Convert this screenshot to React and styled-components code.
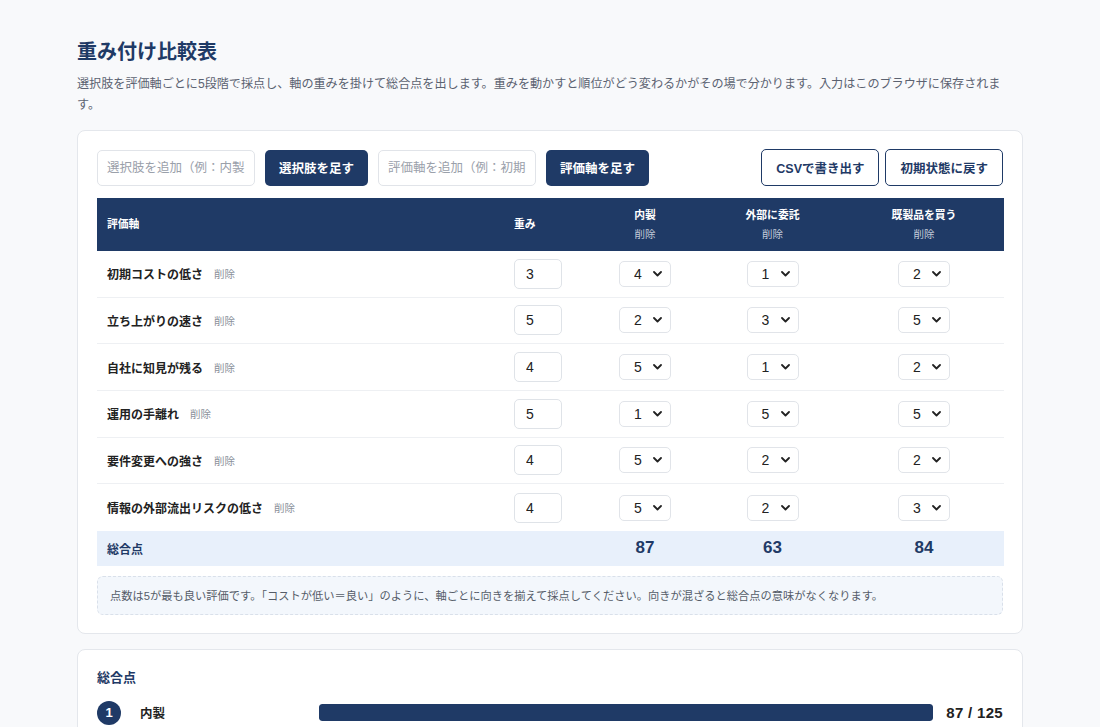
import React from "react";
import styled, { createGlobalStyle } from "styled-components";

const NAVY = "#1f3a66";
const COLS = "407px 85px 112px 143px 160px";

const GlobalStyle = createGlobalStyle`
  body {
    margin: 0;
    background: #f8f9fb;
    font-family: "Liberation Sans", "Noto Sans CJK JP", sans-serif;
    color: #222;
  }
`;

const Page = styled.div`
  width: 946px;
  margin: 0 auto;
  padding: 38px 0 40px;
`;

const Title = styled.h1`
  margin: 0;
  font-size: 20px;
  line-height: 28px;
  font-weight: 700;
  color: ${NAVY};
`;

const Lead = styled.p`
  margin: 8px 0 14px;
  font-size: 12.1px;
  line-height: 21px;
  color: #5b6271;
`;

const Card = styled.section`
  background: #fff;
  border: 1px solid #e4e7ec;
  border-radius: 8px;
  padding: 18px 19px;
  margin-bottom: 15px;
`;

const Toolbar = styled.div`
  display: flex;
  align-items: center;
  gap: 10px;
  margin-bottom: 12px;
`;

const Spacer = styled.div`
  flex: 1;
`;

const TextInput = styled.input`
  box-sizing: border-box;
  width: 158px;
  height: 36px;
  border: 1px solid #e1e4e9;
  border-radius: 5px;
  padding: 0 9px;
  font: inherit;
  font-size: 12.5px;
  color: #222;
  background: #fff;
  &::placeholder {
    color: #9aa0aa;
  }
`;

const Button = styled.button`
  box-sizing: border-box;
  height: ${({ $outline }) => ($outline ? "37px" : "36px")};
  padding: 0 14px;
  border-radius: 5px;
  font: inherit;
  font-size: 12.5px;
  font-weight: 700;
  cursor: pointer;
  background: ${({ $outline }) => ($outline ? "#fff" : NAVY)};
  color: ${({ $outline }) => ($outline ? NAVY : "#fff")};
  border: ${({ $outline }) => ($outline ? `1.5px solid ${NAVY}` : "none")};
  margin-left: ${({ $tight }) => ($tight ? "-4px" : "0")};
`;

const Table = styled.div`
  width: 907px;
`;

const Row = styled.div`
  display: grid;
  grid-template-columns: ${COLS};
  align-items: center;
  height: ${({ $h }) => $h}px;
  background: ${({ $bg }) => $bg || "#fff"};
  border-bottom: ${({ $line }) => ($line ? "1px solid #eef0f3" : "none")};
  box-sizing: border-box;
`;

const HeadCell = styled.div`
  color: #fff;
  font-size: 10.8px;
  font-weight: 700;
  line-height: 19px;
  padding: 0 10px;
  text-align: ${({ $center }) => ($center ? "center" : "left")};
`;

const HeadSub = styled.div`
  font-weight: 400;
  color: #c3cbda;
  font-size: 10.5px;
`;

const Cell = styled.div`
  padding: 0 10px;
  display: flex;
  align-items: center;
  justify-content: ${({ $center }) => ($center ? "center" : "flex-start")};
`;

const Label = styled.span`
  font-size: 12px;
  font-weight: 700;
  color: #222;
`;

const Remove = styled.span`
  font-size: 10.5px;
  color: #8a909a;
  margin-left: 11px;
`;

const WeightInput = styled.input`
  box-sizing: border-box;
  width: 48px;
  height: 30px;
  border: 1px solid #dfe3e8;
  border-radius: 5px;
  padding: 0 11px;
  font: inherit;
  font-size: 14px;
  color: #222;
`;

const SelectWrap = styled.div`
  position: relative;
  width: 52px;
  height: 26px;
`;

const Select = styled.select`
  appearance: none;
  box-sizing: border-box;
  width: 100%;
  height: 100%;
  border: 1px solid #e1e4e9;
  border-radius: 5px;
  background: #fff;
  padding: 0 0 0 14px;
  font: inherit;
  font-size: 14px;
  color: #222;
`;

const Chevron = styled.svg`
  position: absolute;
  right: 9px;
  top: 10px;
  pointer-events: none;
`;

const TotalLabel = styled.span`
  font-size: 12px;
  font-weight: 700;
  color: ${NAVY};
`;

const TotalNum = styled.span`
  font-size: 17px;
  font-weight: 700;
  color: ${NAVY};
`;

const Note = styled.div`
  margin-top: 10px;
  box-sizing: border-box;
  height: 39px;
  display: flex;
  align-items: center;
  padding: 0 12px;
  border: 1px dashed #d9e0ea;
  border-radius: 6px;
  background: #f3f7fc;
  font-size: 11.25px;
  color: #555c68;
`;

const SectionTitle = styled.h2`
  margin: 0 0 13px;
  font-size: 13px;
  line-height: 20px;
  font-weight: 700;
  color: ${NAVY};
`;

const RankRow = styled.div`
  display: flex;
  align-items: center;
  height: 24px;
  margin-bottom: 14px;
`;

const Badge = styled.span`
  width: 24px;
  height: 24px;
  border-radius: 50%;
  background: ${NAVY};
  color: #fff;
  font-size: 13px;
  font-weight: 700;
  display: flex;
  align-items: center;
  justify-content: center;
  flex-shrink: 0;
`;

const RankName = styled.span`
  width: 160px;
  margin: 0 19px;
  font-size: 12.5px;
  font-weight: 700;
  color: #222;
`;

const Track = styled.div`
  flex: 1;
  height: 17px;
  border-radius: 3px;
  background: #e9eef5;
  overflow: hidden;
`;

const Fill = styled.div`
  height: 100%;
  border-radius: 3px;
  background: ${NAVY};
`;

const Score = styled.span`
  margin-left: 11px;
  min-width: 59px;
  text-align: right;
  font-size: 15px;
  font-weight: 700;
  letter-spacing: 0.3px;
  color: #222;
  white-space: nowrap;
`;

const OPTIONS = ["内製", "外部に委託", "既製品を買う"];

const INITIAL = [
  { name: "初期コストの低さ", w: 3, s: [4, 1, 2] },
  { name: "立ち上がりの速さ", w: 5, s: [2, 3, 5] },
  { name: "自社に知見が残る", w: 4, s: [5, 1, 2] },
  { name: "運用の手離れ", w: 5, s: [1, 5, 5] },
  { name: "要件変更への強さ", w: 4, s: [5, 2, 2] },
  { name: "情報の外部流出リスクの低さ", w: 4, s: [5, 2, 3] },
];

const ScoreSelect = ({ value, onChange }) => (
  <SelectWrap>
    <Select value={value} onChange={(e) => onChange(Number(e.target.value))}>
      {[1, 2, 3, 4, 5].map((n) => (
        <option key={n} value={n}>
          {n}
        </option>
      ))}
    </Select>
    <Chevron width="9" height="6" viewBox="0 0 9 6">
      <path d="M1 1l3.5 3.5L8 1" fill="none" stroke="#222" strokeWidth="1.8" strokeLinecap="round" strokeLinejoin="round" />
    </Chevron>
  </SelectWrap>
);

export default function App() {
  const [rows, setRows] = React.useState(INITIAL);

  const totals = OPTIONS.map((_, i) => rows.reduce((sum, r) => sum + r.w * r.s[i], 0));
  const maxTotal = rows.reduce((sum, r) => sum + r.w * 5, 0);
  const best = Math.max(...totals);
  const ranking = OPTIONS.map((name, i) => ({ name, total: totals[i] })).sort((a, b) => b.total - a.total);

  const setScore = (ri, oi, v) =>
    setRows(rows.map((r, k) => (k === ri ? { ...r, s: r.s.map((x, j) => (j === oi ? v : x)) } : r)));
  const setWeight = (ri, v) => setRows(rows.map((r, k) => (k === ri ? { ...r, w: Number(v) || 0 } : r)));

  return (
    <Page>
      <GlobalStyle />
      <Title>重み付け比較表</Title>
      <Lead>
        選択肢を評価軸ごとに5段階で採点し、軸の重みを掛けて総合点を出します。重みを動かすと順位がどう変わるかがその場で分かります。入力はこのブラウザに保存されます。
      </Lead>

      <Card>
        <Toolbar>
          <TextInput placeholder="選択肢を追加（例：内製）" />
          <Button>選択肢を足す</Button>
          <TextInput placeholder="評価軸を追加（例：初期コスト）" />
          <Button>評価軸を足す</Button>
          <Spacer />
          <Button $outline>CSVで書き出す</Button>
          <Button $outline $tight>初期状態に戻す</Button>
        </Toolbar>

        <Table>
          <Row $h={53} $bg={NAVY}>
            <HeadCell>評価軸</HeadCell>
            <HeadCell>重み</HeadCell>
            {OPTIONS.map((o) => (
              <HeadCell key={o} $center>
                {o}
                <HeadSub>削除</HeadSub>
              </HeadCell>
            ))}
          </Row>
          {rows.map((r, ri) => (
            <Row key={r.name} $h={46.67} $line={ri < rows.length - 1}>
              <Cell>
                <Label>{r.name}</Label>
                <Remove>削除</Remove>
              </Cell>
              <Cell>
                <WeightInput value={r.w} onChange={(e) => setWeight(ri, e.target.value)} />
              </Cell>
              {r.s.map((v, oi) => (
                <Cell key={oi} $center>
                  <ScoreSelect value={v} onChange={(nv) => setScore(ri, oi, nv)} />
                </Cell>
              ))}
            </Row>
          ))}
          <Row $h={35} $bg="#e8f0fb">
            <Cell>
              <TotalLabel>総合点</TotalLabel>
            </Cell>
            <Cell />
            {totals.map((t, i) => (
              <Cell key={i} $center>
                <TotalNum>{t}</TotalNum>
              </Cell>
            ))}
          </Row>
        </Table>

        <Note>
          点数は5が最も良い評価です。「コストが低い＝良い」のように、軸ごとに向きを揃えて採点してください。向きが混ざると総合点の意味がなくなります。
        </Note>
      </Card>

      <Card>
        <SectionTitle>総合点</SectionTitle>
        {ranking.map((r, i) => (
          <RankRow key={r.name}>
            <Badge>{i + 1}</Badge>
            <RankName>{r.name}</RankName>
            <Track>
              <Fill style={{ width: `${(r.total / best) * 100}%` }} />
            </Track>
            <Score>
              {r.total} / {maxTotal}
            </Score>
          </RankRow>
        ))}
      </Card>
    </Page>
  );
}
